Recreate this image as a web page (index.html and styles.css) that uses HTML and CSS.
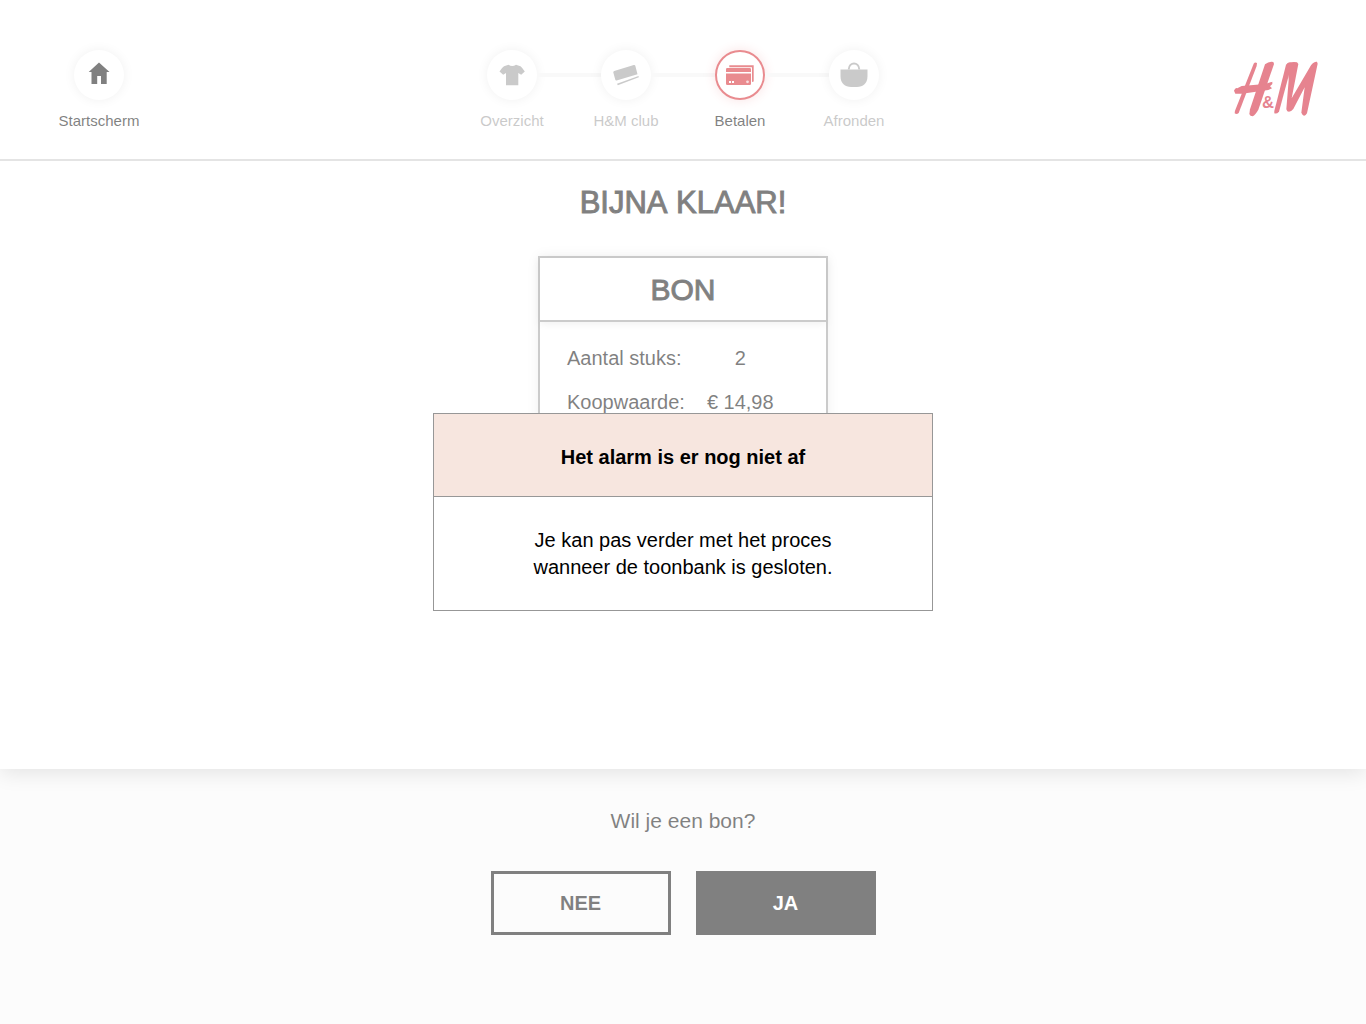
FILE: index.html
```html
<!DOCTYPE html>
<html lang="nl">
<head>
<meta charset="utf-8">
<meta name="viewport" content="width=device-width, initial-scale=1">
<title>H&amp;M – Betalen</title>
<link rel="stylesheet" href="styles.css">
</head>
<body>
<div class="page">
  <div class="panel">
    <header class="header">
      <a class="step home" href="#">
        <span class="step-circle">
          <svg class="icon" viewBox="0 0 30 30" aria-hidden="true"><path fill="currentColor" d="M15 2.500 25.500 12H22.700V24H17V16H13.200V24H7.500V12H4.700Z"/></svg>
        </span>
        <span class="step-label">Startscherm</span>
      </a>
      <ol class="steps">
        <li class="step">
          <span class="step-circle">
            <svg class="icon" viewBox="0 0 30 30" aria-hidden="true"><path fill="currentColor" d="M11.500 4.700Q15.200 7.400 19 4.700L23.500 6.300Q25.500 8 27.800 11.500L24.200 14.800 21.300 13V25.300H9V13L6.200 14.800 2.500 11.500Q4.500 8 7 6.300Z"/></svg>
          </span>
          <span class="step-label">Overzicht</span>
        </li>
        <li class="step">
          <span class="step-circle">
            <svg class="icon" viewBox="0 0 30 30" aria-hidden="true"><g fill="currentColor"><path d="M3.200 11Q2 11.500 2.300 12.500L4.300 19.800Q4.600 20.800 5.600 20.500L26.500 14.300 24.300 5.800Q23.900 4.600 22.800 5Z"/><path d="M6 23.800 27.500 16 27.800 17.300 6.800 25.300Z"/></g></svg>
          </span>
          <span class="step-label">H&amp;M club</span>
        </li>
        <li class="step current" aria-current="step">
          <span class="step-circle">
            <svg class="icon" viewBox="0 0 30 30" aria-hidden="true"><g fill="currentColor"><path d="M4.300 5.300H28.700V21.500L27 22V7.200H4.300Z"/><path d="M1 9.300Q1 8 2.300 8H24.700Q26 8 26 9.300V12H1Z"/><path d="M1 13.600H26V23.700Q26 25 24.700 25H2.300Q1 25 1 23.700Z"/></g><g fill="#fff"><path d="M4 21H6V23H4ZM7 21H9V23H7Z"/><circle cx="22.500" cy="21.800" r="1.400" opacity=".7"/></g></svg>
          </span>
          <span class="step-label">Betalen</span>
        </li>
        <li class="step">
          <span class="step-circle">
            <svg class="icon" viewBox="0 0 30 30" aria-hidden="true"><path fill="none" stroke="currentColor" stroke-width="2" d="M9.700 9.500C10.200 1.600 19.800 1.600 20.300 9.500"/><path fill="currentColor" d="M1.500 9.500H28.500V16C28.500 23.500 24 27 18 27H12C6 27 1.500 23.500 1.500 16Z"/></svg>
          </span>
          <span class="step-label">Afronden</span>
        </li>
      </ol>
      <svg class="logo" viewBox="24 27 288 180" role="img" aria-label="H&amp;M">
        <g fill="currentColor">
          <path d="M101 41Q105 35 111 39L110 48 56 189Q50 195 44 190L45 182Z"/>
          <path d="M135 43Q147 33 160 36L162 42 115 179Q106 195 98 199 90 199 88 192L90 178Z"/>
          <path d="M42 122Q46 112 52 115L65 108 135 102 157 95 157 102 150 109 156 115 145 120 66 131 46 131Z"/>
          <path d="M198 44Q204 36 213 38L214 48 177 185Q170 193 163 190L163 183Z"/>
          <path d="M203 39Q220 34 231 37L235 42 215 145 273 46Q281 34 291 35L293 41 261 190Q255 201 248 195L244 188 254 112 220 177Q210 189 202 184L199 178 206 90Z"/>
        </g>
        <text class="logo-amp" x="144" y="175" text-anchor="middle">&amp;</text>
      </svg>
    </header>
    <main class="content">
      <h1 class="title">BIJNA KLAAR!</h1>
      <section class="receipt">
        <h2 class="receipt-title">BON</h2>
        <table class="receipt-table">
          <tr><th scope="row">Aantal stuks:</th><td>2</td></tr>
          <tr><th scope="row">Koopwaarde:</th><td>€ 14,98</td></tr>
        </table>
      </section>
    </main>
  </div>
  <footer class="footer">
    <p class="question">Wil je een bon?</p>
    <div class="actions">
      <button class="button" type="button">NEE</button>
      <button class="button button-primary" type="button">JA</button>
    </div>
  </footer>
</div>
<div class="overlay">
  <div class="dialog" role="alertdialog" aria-modal="true" aria-labelledby="dialog-title" aria-describedby="dialog-text">
    <h2 class="dialog-title" id="dialog-title">Het alarm is er nog niet af</h2>
    <p class="dialog-text" id="dialog-text">Je kan pas verder met het proces<br>wanneer de toonbank is gesloten.</p>
  </div>
</div>
</body>
</html>
```
FILE: styles.css
```css
* {
  box-sizing: border-box;
}

body {
  margin: 0;
  color: #000;
  font-family: "Liberation Sans", Arial, sans-serif;
  font-size: 20px;
}

h1, h2, p, ol {
  margin: 0;
  padding: 0;
}

.page {
  display: flex;
  flex-direction: column;
  min-height: 100vh;
  background: #f9f9f9;
}

.panel {
  flex: 1;
  background: #fff;
  box-shadow: 0 4px 20px rgba(0, 0, 0, 0.2);
}

.header {
  display: grid;
  grid-template-columns: 1fr auto 1fr;
  align-items: start;
  padding: 50px 42px 29px;
  border-bottom: 2px solid #c8c8c8;
}

.steps {
  display: flex;
  list-style: none;
}

.step {
  position: relative;
  display: flex;
  flex-direction: column;
  align-items: center;
  gap: 12px;
  width: 114px;
  color: #959595;
  font-size: 15px;
  line-height: 18px;
  text-decoration: none;
}

.home {
  color: #000;
}

.step-circle {
  display: grid;
  place-items: center;
  width: 50px;
  height: 50px;
  border-radius: 50%;
  background: #fff;
  box-shadow: 0 0 12px rgba(0, 0, 0, 0.12);
}

/* Connecting line to the next step */
.steps .step:not(:last-child)::after {
  content: "";
  position: absolute;
  top: 23px;
  left: calc(50% + 25px);
  width: calc(100% - 50px);
  height: 4px;
  background: #f2f2f2;
}

.icon {
  width: 30px;
  height: 30px;
}

.current .step-circle {
  border: 2px solid currentColor;
  color: #d2171f;
  box-shadow: 0 0 12px rgba(210, 23, 31, 0.25);
}

.current .step-label {
  color: #000;
}

.logo {
  justify-self: end;
  width: 96px;
  height: 60px;
  margin-top: 9px;
  color: #cc071e;
}

.logo-amp {
  fill: currentColor;
  font-size: 50px;
  font-weight: bold;
}

.content {
  display: flex;
  flex-direction: column;
  align-items: center;
  gap: 35px;
  padding: 24px 20px 40px;
}

.title,
.receipt-title {
  font-size: 30px;
  font-weight: normal;
  font-kerning: none;
  line-height: 36px;
  -webkit-text-stroke: 1px currentColor;
}

.title {
  font-size: 31px;
}

.receipt {
  width: 290px;
  border: 2px solid #979797;
  box-shadow: 0 0 12px rgba(0, 0, 0, 0.12);
}

.receipt-title {
  padding: 14px 0 12px;
  border-bottom: 2px solid #979797;
  text-align: center;
  box-shadow: 0 2px 8px rgba(0, 0, 0, 0.12);
}

.receipt-table {
  margin: 14px 27px;
  border-collapse: collapse;
}

.receipt-table th,
.receipt-table td {
  height: 44px;
  padding: 0;
  font-weight: normal;
  text-align: left;
}

.receipt-table td {
  padding-left: 22px;
  text-align: center;
}

.footer {
  display: flex;
  flex-direction: column;
  align-items: center;
  gap: 38px;
  padding: 40px 20px 89px;
}

.question {
  position: relative;
  font-size: 21px;
  line-height: 24px;
}

.actions {
  display: flex;
  gap: 25px;
}

.button {
  width: 180px;
  height: 64px;
  border: 3px solid #000;
  border-radius: 0;
  background: transparent;
  color: #000;
  font-family: inherit;
  font-size: 20px;
  font-weight: bold;
}

.button-primary {
  background: #000;
  color: #fff;
}

.overlay {
  position: fixed;
  inset: 0;
  display: grid;
  place-items: center;
  background: rgba(255, 255, 255, 0.5);
}

.dialog {
  width: 500px;
  max-width: 100%;
  border: 1px solid #979797;
  background: #fff;
  text-align: center;
}

.dialog-title {
  padding: 30px 20px 26px;
  border-bottom: 1px solid #979797;
  background: #f7e6df;
  font-size: 20px;
  line-height: 26px;
}

.dialog-text {
  padding: 30px 20px 29px;
  line-height: 27px;
}
```
